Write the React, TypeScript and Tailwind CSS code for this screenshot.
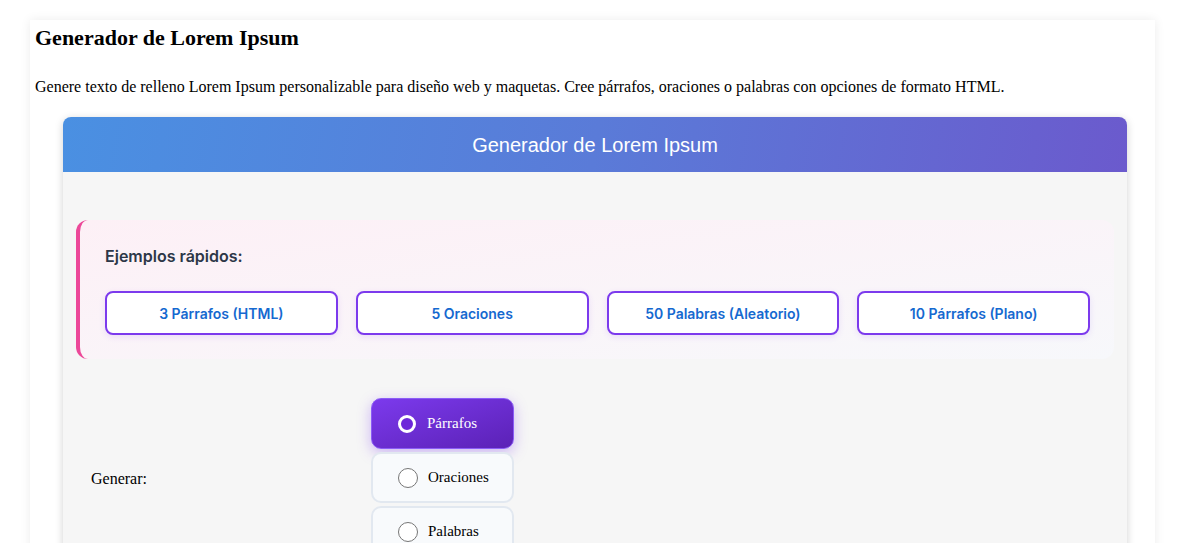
import { useState } from "react";

const quickExamples = [
  "3 Párrafos (HTML)",
  "5 Oraciones",
  "50 Palabras (Aleatorio)",
  "10 Párrafos (Plano)",
];

const modes = ["Párrafos", "Oraciones", "Palabras"];

function RadioOption({
  label,
  checked,
  onSelect,
}: {
  label: string;
  checked: boolean;
  onSelect: () => void;
}) {
  return (
    <button
      type="button"
      onClick={onSelect}
      className={
        checked
          ? "flex h-[51px] w-[143px] items-center gap-[11px] rounded-[10px] border border-[#8b5cf6] bg-gradient-to-br from-[#7c3aed] to-[#5b21b6] pl-[26px] text-white shadow-[0_4px_14px_rgba(124,58,237,0.35)]"
          : "flex h-[51px] w-[143px] items-center gap-[10px] rounded-[10px] border-2 border-[#e2e8f0] bg-[#f8fafc] pl-[25px] text-black"
      }
    >
      {checked ? (
        <span className="h-[18px] w-[18px] rounded-full border-[3px] border-white bg-[#6d28d9]" />
      ) : (
        <span className="h-[20px] w-[20px] rounded-full border border-[#767676] bg-white" />
      )}
      <span className="font-['Liberation_Serif',serif] text-[15px]">{label}</span>
    </button>
  );
}

export default function App() {
  const [mode, setMode] = useState("Párrafos");

  return (
    <div className="min-h-[700px] bg-white pt-[20px] font-['Liberation_Serif',serif] text-black">
      <div className="ml-[30px] w-[1125px] bg-white px-[5px] pt-[5px] pb-10 shadow-[0_0_10px_rgba(0,0,0,0.08)]">
        <h2 className="text-[22px] font-bold leading-[26px]">Generador de Lorem Ipsum</h2>
        <p className="mt-[27px] text-[16px] leading-[18px]">
          Genere texto de relleno Lorem Ipsum personalizable para diseño web y maquetas. Cree párrafos,
          oraciones o palabras con opciones de formato HTML.
        </p>

        {/* generator tool */}
        <div className="ml-[28px] mt-[21px] w-[1064px] overflow-hidden rounded-lg shadow-[0_2px_8px_rgba(0,0,0,0.18)]">
          <div className="flex h-[55px] items-center justify-center bg-[linear-gradient(100deg,#4a90e2_0%,#5a7bd8_50%,#6b5acd_100%)] font-['Liberation_Sans',sans-serif] text-[20px] text-white">
            Generador de Lorem Ipsum
          </div>

          <div className="bg-[#f6f6f6] px-[13px] pt-[48px] pb-16">
            {/* quick examples */}
            <div className="rounded-xl border-l-4 border-[#ec4899] bg-gradient-to-br from-[#fdf0f6] to-[#f7f8fb] pt-[24px] pr-[24px] pb-[24px] pl-[25px] font-['Inter',sans-serif]">
              <h4 className="text-[16px] font-semibold leading-[24px] text-[#2d3748]">Ejemplos rápidos:</h4>
              <div className="mt-[23px] grid grid-cols-4 gap-[18px]">
                {quickExamples.map((ex) => (
                  <button
                    key={ex}
                    type="button"
                    className="h-[44px] rounded-lg border-2 border-[#7c3aed] bg-white text-[14px] font-semibold text-[#1569d0] shadow-[0_2px_6px_rgba(124,58,237,0.12)]"
                  >
                    {ex}
                  </button>
                ))}
              </div>
            </div>

            {/* mode selector */}
            <div className="mt-[39px] flex items-center pl-[15px]">
              <label className="w-[280px] shrink-0 pt-[2px] text-[16px]">Generar:</label>
              <div className="flex flex-col gap-[3px]">
                {modes.map((m) => (
                  <RadioOption key={m} label={m} checked={mode === m} onSelect={() => setMode(m)} />
                ))}
              </div>
            </div>
          </div>
        </div>
      </div>
    </div>
  );
}
